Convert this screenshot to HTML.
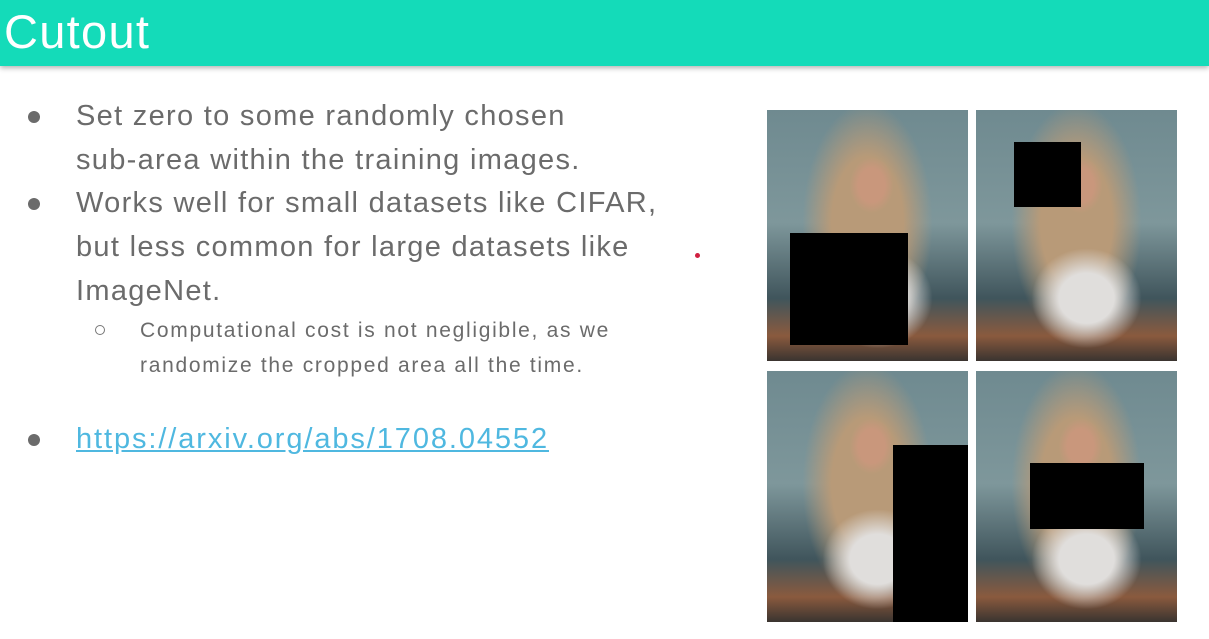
<!DOCTYPE html>
<html><head><style>
body{margin:0;width:1209px;height:639px;background:#fff;position:relative;overflow:hidden;font-family:"Liberation Sans",Arial,sans-serif}
.hdr{position:absolute;left:0;top:0;width:1209px;height:66px;background:#14dbb9;box-shadow:0 2px 5px rgba(0,0,0,.3)}
.hdr span{position:absolute;left:4px;top:4px;font-size:47px;color:#fff;letter-spacing:1.3px}
.t{position:absolute;color:#6b6b6b;font-size:29px;white-space:nowrap;letter-spacing:1.3px}
.dot{position:absolute;width:12px;height:12px;border-radius:50%;background:#6b6b6b}
.s{position:absolute;color:#6b6b6b;font-size:21px;white-space:nowrap;letter-spacing:1.7px}
.ph{position:absolute;width:201px;height:251px;background:
radial-gradient(ellipse 22px 28px at 52% 30%,#c9977c 60%,transparent 100%),
radial-gradient(ellipse 55px 50px at 55% 75%,#e0dedc 50%,transparent 100%),
radial-gradient(ellipse 65px 120px at 50% 45%,#b89a78 55%,transparent 100%),
linear-gradient(180deg,#6f8a90 0%,#7e979b 45%,#40555c 75%,#8a5a3e 90%,#3a3430 100%)}
.b{position:absolute;background:#000}
</style></head><body>
<div class="hdr"><span>Cutout</span></div>
<div class="dot" style="left:28px;top:111px"></div>
<div class="t" style="left:76px;top:100px">Set zero to some randomly chosen</div>
<div class="t" style="left:76px;top:144px">sub-area within the training images.</div>
<div class="dot" style="left:28px;top:198px"></div>
<div class="t" style="left:76px;top:187px">Works well for small datasets like CIFAR,</div>
<div class="t" style="left:76px;top:231px">but less common for large datasets like</div>
<div class="t" style="left:76px;top:275px">ImageNet.</div>
<div style="position:absolute;left:95px;top:325px;width:8px;height:8px;border:1.5px solid #777;border-radius:50%"></div>
<div class="s" style="left:140px;top:319px">Computational cost is not negligible, as we</div>
<div class="s" style="left:140px;top:354px">randomize the cropped area all the time.</div>
<div class="dot" style="left:28px;top:434px"></div>
<div class="t" style="left:76px;top:423px;color:#4fb8e0;text-decoration:underline;letter-spacing:1.9px">https://arxiv.org/abs/1708.04552</div>
<div style="position:absolute;left:695px;top:253px;width:5px;height:5px;border-radius:50%;background:#d02040"></div>
<div class="ph" style="left:767px;top:110px"></div>
<div class="ph" style="left:976px;top:110px"></div>
<div class="ph" style="left:767px;top:371px"></div>
<div class="ph" style="left:976px;top:371px"></div>
<div class="b" style="left:790px;top:233px;width:118px;height:112px"></div>
<div class="b" style="left:1014px;top:142px;width:67px;height:65px"></div>
<div class="b" style="left:893px;top:445px;width:75px;height:177px"></div>
<div class="b" style="left:1030px;top:463px;width:114px;height:66px"></div>
</body></html>
